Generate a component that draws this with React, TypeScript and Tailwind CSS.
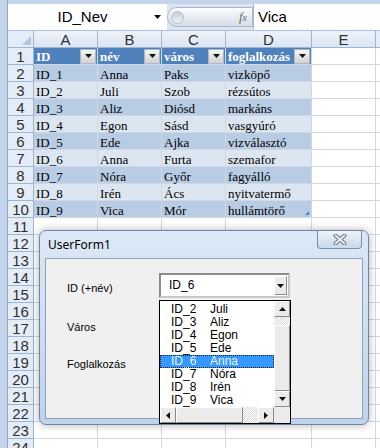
const data = [
  ["ID_1", "Anna", "Paks", "vizköpő"],
  ["ID_2", "Juli", "Szob", "rézsútos"],
  ["ID_3", "Aliz", "Diósd", "markáns"],
  ["ID_4", "Egon", "Sásd", "vasgyúró"],
  ["ID_5", "Ede", "Ajka", "vizválasztó"],
  ["ID_6", "Anna", "Furta", "szemafor"],
  ["ID_7", "Nóra", "Győr", "fagyálló"],
  ["ID_8", "Irén", "Ács", "nyitvatermő"],
  ["ID_9", "Vica", "Mór", "hullámtörő"],
];

const headers = ["ID", "név", "város", "foglalkozás"];
const letters = ["A", "B", "C", "D", "E"];
const widths = ["w-[64px]", "w-[64px]", "w-[64px]", "w-[86px]", "w-[64px]"];

const listItems = data.slice(1).map((r) => [r[0], r[1]]);

const Down = () => (
  <svg viewBox="0 0 7 4" className="w-[7px] h-[4px]"><path d="M0 0h7L3.5 4z" fill="#111" /></svg>
);
const Up = () => (
  <svg viewBox="0 0 7 4" className="w-[7px] h-[4px]"><path d="M0 4h7L3.5 0z" fill="#111" /></svg>
);
const Left = () => (
  <svg viewBox="0 0 4 7" className="w-[4px] h-[7px]"><path d="M4 0v7L0 3.5z" fill="#111" /></svg>
);
const Right = () => (
  <svg viewBox="0 0 4 7" className="w-[4px] h-[7px]"><path d="M0 0v7l4-3.5z" fill="#111" /></svg>
);

const btn =
  "flex items-center justify-center bg-[#ebebeb] border border-t-white border-l-white border-b-[#8a8a8a] border-r-[#8a8a8a]";
const dither =
  "bg-[repeating-conic-gradient(#ffffff_0_25%,#dcdcdc_0_50%)] bg-[length:2px_2px]";

function FilterButton() {
  return (
    <span className="w-[16px] h-[15px] mr-[1px] flex items-center justify-center bg-linear-to-b from-[#f6f6f6] to-[#d2d2d2] border border-[#b1b7c2] shrink-0">
      <Down />
    </span>
  );
}

function SheetRow({ n }: { n: number }) {
  const rowData = n >= 2 && n <= 10 ? data[n - 2] : null;
  const band = n === 1 ? "bg-[#4f81bd]" : n % 2 === 0 ? "bg-[#b8cce4]" : "bg-[#dce6f1]";
  return (
    <div className="flex h-[17px] shrink-0">
      <div className="w-[26px] shrink-0 flex items-center justify-center bg-[#e4ecf7] border-r border-b border-[#9eb6ce] text-[15px] leading-none text-[#303030]">
        {n}
      </div>
      {widths.map((w, i) => {
        const inTable = n <= 10 && i < 4;
        return (
          <div
            key={i}
            className={`${w} shrink-0 relative flex items-center border-r border-b border-[#d0d7e5] font-['Liberation_Serif',serif] text-[13px] leading-none ${inTable ? band : "bg-white"}`}
          >
            {n === 1 && inTable && (
              <div className="flex w-full items-center justify-between pl-[2px] text-white font-bold">
                <span>{headers[i]}</span>
                <FilterButton />
              </div>
            )}
            {rowData && i < 4 && <span className="pl-[2px] pt-[2px] text-black">{rowData[i]}</span>}
            {n === 10 && i === 3 && (
              <svg viewBox="0 0 4 4" className="absolute right-[2px] bottom-[2px] w-[4px] h-[4px]">
                <path d="M4 0v4H0z" fill="#4f81bd" />
              </svg>
            )}
          </div>
        );
      })}
      <div className="flex-1 border-b border-[#d0d7e5] bg-white" />
    </div>
  );
}

export default function App() {
  const rows = Array.from({ length: 24 }, (_, i) => i + 1);
  return (
    <div className="relative w-[380px] h-[448px] overflow-hidden bg-white font-['Liberation_Sans',Arial,sans-serif] flex">
      {/* window frame */}
      <div className="w-[8px] shrink-0 bg-[#c4d5eb] border-r border-[#8fa7c6]" />

      <div className="flex-1 flex flex-col min-w-0">
        <div className="h-[4px] shrink-0 bg-[#c4d5eb]" />

        {/* formula bar */}
        <div className="h-[27px] shrink-0 flex items-stretch bg-[#dbe5f2] border-b border-[#aebfd6]">
          <div className="w-[159px] shrink-0 bg-white flex items-center relative">
            <span className="flex-1 text-center text-[15px] text-black pr-[10px]">ID_Nev</span>
            <span className="absolute left-[146px] top-[11px]"><Down /></span>
          </div>
          <div className="w-[86px] shrink-0 flex items-center py-[3px]">
            <div className="h-full flex-1 flex items-center justify-between rounded-l-full border border-[#a9b7cb] bg-linear-to-b from-[#fbfcfe] to-[#d5dde9] pl-[3px] pr-[5px]">
              <span className="w-[13px] h-[13px] rounded-full bg-linear-to-b from-[#c8d0dc] to-[#eef2f7] border border-[#b3bfcf]" />
              <span className="font-['Liberation_Serif',serif] italic text-[13px] text-[#6a6a6a]">
                f<span className="text-[10px]">x</span>
              </span>
            </div>
          </div>
          <div className="flex-1 bg-white border-l border-[#a9b7cb] flex items-center pl-[4px] text-[15px] text-black">Vica</div>
        </div>

        {/* column headers */}
        <div className="flex h-[17px] shrink-0">
          <div className="w-[26px] shrink-0 relative bg-[#e4ecf7] border-r border-b border-[#9eb6ce]">
            <svg viewBox="0 0 9 9" className="absolute right-[2px] bottom-[2px] w-[9px] h-[9px]">
              <path d="M9 0v9H0z" fill="#b4c6dd" />
            </svg>
          </div>
          {letters.map((l, i) => (
            <div
              key={l}
              className={`${widths[i]} shrink-0 flex items-center justify-center bg-linear-to-b from-[#eef3fa] to-[#dbe5f3] border-r border-b border-[#9eb6ce] text-[15px] leading-none text-[#303030]`}
            >
              {l}
            </div>
          ))}
          <div className="flex-1 bg-[#e4ecf7] border-b border-[#9eb6ce]" />
        </div>

        {rows.map((n) => (
          <SheetRow key={n} n={n} />
        ))}
      </div>

      {/* UserForm window */}
      <div className="absolute left-[39px] top-[230px] w-[330px] h-[195px] rounded-[7px] border border-[#6f86a6] bg-linear-to-b from-[#dce8f7] to-[#c0d3eb] shadow-[0_0_8px_rgba(0,0,0,0.3)] flex flex-col">
        <div className="h-[27px] shrink-0 flex items-start justify-between pl-[8px] pr-[6px]">
          <span className="pt-[7px] text-[12px] leading-[14px] text-black font-['Noto_Sans',sans-serif]">UserForm1</span>
          <div className="w-[45px] h-[18px] rounded-b-[4px] border border-t-0 border-[#7b8ea9] bg-linear-to-b from-[#eef3fa] to-[#c9d8eb] flex items-center justify-center">
            <svg viewBox="0 0 14 11" className="w-[14px] h-[11px]">
              <path d="M2.5 1.5l9 8M11.5 1.5l-9 8" stroke="#6f7886" strokeWidth="4" strokeLinecap="round" />
              <path d="M2.5 1.5l9 8M11.5 1.5l-9 8" stroke="#e9edf2" strokeWidth="2" strokeLinecap="round" />
            </svg>
          </div>
        </div>

        <div className="relative flex-1 mx-[5px] mb-[5px] bg-[#f0f0f0] border border-[#8da2bf] flex font-['Liberation_Sans',Arial,sans-serif]">
          <div className="w-[113px] shrink-0 flex flex-col pl-[21px] pt-[22px] text-[11px] leading-[14px] text-black">
            <span>ID (+név)</span>
            <span className="mt-[25px]">Város</span>
            <span className="mt-[23px]">Foglalkozás</span>
          </div>

          <div className="pt-[14px]">
            <div className="w-[131px] h-[25px] flex items-start justify-between bg-white border-2 border-t-[#8c8c8c] border-l-[#8c8c8c] border-b-[#c8c8c8] border-r-[#c8c8c8]">
              <span className="pl-[8px] pt-[4px] text-[12px] leading-[13px] text-black">ID_6</span>
              <span className={`${btn} w-[13px] h-[19px] mt-[1px] mr-[1px]`}>
                <Down />
              </span>
            </div>
          </div>

          {/* dropdown list */}
          <div className="absolute left-[113px] top-[41px] w-[132px] h-[124px] z-10 bg-white border border-black flex flex-col">
            <div className="h-[106px] flex">
              <div className="w-[114px] pt-[2px] flex flex-col">
                {listItems.map(([id, name]) => {
                  const sel = id === "ID_6";
                  return (
                    <div
                      key={id}
                      className={`h-[13px] flex items-center text-[12px] leading-[13px] ${sel ? "bg-[#3399ff] text-[#eaf4ff] outline-1 outline-dotted outline-[#1c1c1c] -outline-offset-1" : "text-black"}`}
                    >
                      <span className="w-[50px] pl-[11px] shrink-0">{id}</span>
                      <span>{name}</span>
                    </div>
                  );
                })}
              </div>
              <div className="w-[16px] flex flex-col">
                <span className={`${btn} h-[16px]`}><Up /></span>
                <span className={`${dither} h-[8px]`} />
                <span className={`${btn} h-[66px]`} />
                <span className={`${btn} h-[16px]`}><Down /></span>
              </div>
            </div>
            <div className="h-[16px] flex">
              <span className={`${btn} w-[16px]`}><Left /></span>
              <span className={`${btn} w-[67px]`} />
              <span className={`${dither} w-[15px]`} />
              <span className={`${btn} w-[16px]`}><Right /></span>
              <span className="w-[16px] bg-[#ebebeb]" />
            </div>
          </div>
        </div>
      </div>
    </div>
  );
}
